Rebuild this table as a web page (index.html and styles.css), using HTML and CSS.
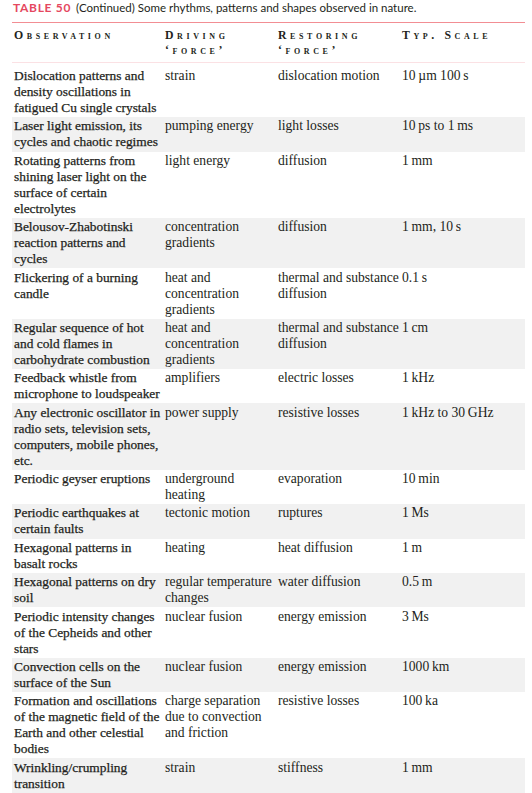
FILE: index.html
```html
<!DOCTYPE html>
<html lang="en">
<head>
    <meta charset="UTF-8">
    <meta name="viewport" content="width=device-width, initial-scale=1.0">
    <title>Table 50 - Rhythms, patterns and shapes</title>
    <link rel="stylesheet" href="styles.css">
</head>
<body>
    <div class="table-wrap">
        <p class="caption"><span class="caption-label">TABLE 50</span> (Continued) Some rhythms, patterns and shapes observed in nature.</p>
        <table class="nature-table">
            <colgroup>
                <col class="col-obs">
                <col class="col-drive">
                <col class="col-restore">
                <col class="col-scale">
            </colgroup>
            <thead>
                <tr>
                    <th>Observation</th>
                    <th>Driving<br>&lsquo;force&rsquo;</th>
                    <th>Restoring<br>&lsquo;force&rsquo;</th>
                    <th>Typ. Scale</th>
                </tr>
            </thead>
            <tbody>
                <tr>
                    <td>Dislocation patterns and<br>density oscillations in<br>fatigued Cu single crystals</td>
                    <td>strain</td>
                    <td>dislocation motion</td>
                    <td>10&thinsp;&micro;m 100&thinsp;s</td>
                </tr>
                <tr>
                    <td>Laser light emission, its<br>cycles and chaotic regimes</td>
                    <td>pumping energy</td>
                    <td>light losses</td>
                    <td>10&thinsp;ps to 1&thinsp;ms</td>
                </tr>
                <tr>
                    <td>Rotating patterns from<br>shining laser light on the<br>surface of certain<br>electrolytes</td>
                    <td>light energy</td>
                    <td>diffusion</td>
                    <td>1&thinsp;mm</td>
                </tr>
                <tr>
                    <td>Belousov-Zhabotinski<br>reaction patterns and<br>cycles</td>
                    <td>concentration<br>gradients</td>
                    <td>diffusion</td>
                    <td>1&thinsp;mm, 10&thinsp;s</td>
                </tr>
                <tr>
                    <td>Flickering of a burning<br>candle</td>
                    <td>heat and<br>concentration<br>gradients</td>
                    <td>thermal and substance<br>diffusion</td>
                    <td>0.1&thinsp;s</td>
                </tr>
                <tr>
                    <td>Regular sequence of hot<br>and cold flames in<br>carbohydrate combustion</td>
                    <td>heat and<br>concentration<br>gradients</td>
                    <td>thermal and substance<br>diffusion</td>
                    <td>1&thinsp;cm</td>
                </tr>
                <tr>
                    <td>Feedback whistle from<br>microphone to loudspeaker</td>
                    <td>amplifiers</td>
                    <td>electric losses</td>
                    <td>1&thinsp;kHz</td>
                </tr>
                <tr>
                    <td>Any electronic oscillator in<br>radio sets, television sets,<br>computers, mobile phones,<br>etc.</td>
                    <td>power supply</td>
                    <td>resistive losses</td>
                    <td>1&thinsp;kHz to 30&thinsp;GHz</td>
                </tr>
                <tr>
                    <td>Periodic geyser eruptions</td>
                    <td>underground<br>heating</td>
                    <td>evaporation</td>
                    <td>10&thinsp;min</td>
                </tr>
                <tr>
                    <td>Periodic earthquakes at<br>certain faults</td>
                    <td>tectonic motion</td>
                    <td>ruptures</td>
                    <td>1&thinsp;Ms</td>
                </tr>
                <tr>
                    <td>Hexagonal patterns in<br>basalt rocks</td>
                    <td>heating</td>
                    <td>heat diffusion</td>
                    <td>1&thinsp;m</td>
                </tr>
                <tr>
                    <td>Hexagonal patterns on dry<br>soil</td>
                    <td>regular temperature<br>changes</td>
                    <td>water diffusion</td>
                    <td>0.5&thinsp;m</td>
                </tr>
                <tr>
                    <td>Periodic intensity changes<br>of the Cepheids and other<br>stars</td>
                    <td>nuclear fusion</td>
                    <td>energy emission</td>
                    <td>3&thinsp;Ms</td>
                </tr>
                <tr>
                    <td>Convection cells on the<br>surface of the Sun</td>
                    <td>nuclear fusion</td>
                    <td>energy emission</td>
                    <td>1000&thinsp;km</td>
                </tr>
                <tr>
                    <td>Formation and oscillations<br>of the magnetic field of the<br>Earth and other celestial<br>bodies</td>
                    <td>charge separation<br>due to convection<br>and friction</td>
                    <td>resistive losses</td>
                    <td>100&thinsp;ka</td>
                </tr>
                <tr>
                    <td>Wrinkling/crumpling<br>transition</td>
                    <td>strain</td>
                    <td>stiffness</td>
                    <td>1&thinsp;mm</td>
                </tr>
            </tbody>
        </table>
    </div>
</body>
</html>
```

FILE: styles.css
```css
body {
    margin: 0;
    padding: 0;
    background-color: #fff;
    color: #231f20;
    font-family: "Liberation Serif", "Times New Roman", serif;
}

.table-wrap {
    padding: 0 7px 0 12px;
}

.caption {
    margin: 1px 0 7px 1px;
    font-family: Lato, "Liberation Sans", sans-serif;
    font-size: 11.5px;
    line-height: 14px;
    color: #231f20;
}

.caption-label {
    color: #e5485f;
    font-weight: bold;
    font-size: 12px;
    letter-spacing: 0.7px;
    margin-right: 2px;
}

.nature-table {
    width: 513px;
    border-collapse: collapse;
    table-layout: fixed;
    border-top: 1px solid #f28d93;
}

.col-obs {
    width: 151px;
}

.col-drive {
    width: 113px;
}

.col-restore {
    width: 124px;
}

.col-scale {
    width: 125px;
}

.nature-table th {
    text-align: left;
    vertical-align: top;
    font-size: 11.8px;
    font-weight: bold;
    font-variant: small-caps;
    letter-spacing: 3.6px;
    line-height: 15px;
    padding: 5px 2px 4px 2px;
    border-bottom: 1px solid #fbe1e4;
    white-space: nowrap;
}

.nature-table td {
    vertical-align: top;
    font-size: 13.6px;
    line-height: 16px;
    padding: 1.2px 2px;
    white-space: nowrap;
}

.nature-table td:first-child {
    font-size: 13.4px;
    -webkit-text-stroke: 0.25px #231f20;
}

.nature-table tbody tr:first-child td {
    padding-top: 5px;
}

.nature-table tbody tr:nth-child(even) {
    background-color: #f1f1f1;
}
```
